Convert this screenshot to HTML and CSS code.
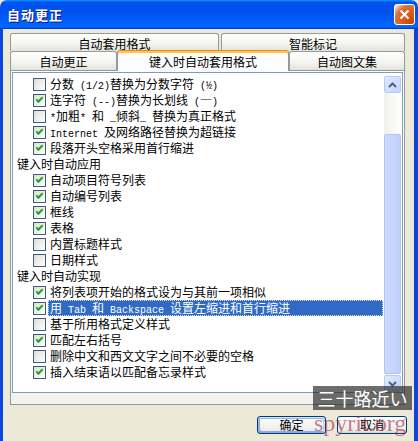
FILE: index.html
```html
<!DOCTYPE html>
<html lang="zh-CN">
<head>
    <meta charset="UTF-8">
    <meta name="viewport" content="width=device-width, initial-scale=1.0">
    <title>自动更正</title>
    <link rel="stylesheet" href="styles.css">
</head>
<body>

    <div class="window">
        <div class="titlebar">
            <span class="title">自动更正</span>
            <button class="close-btn" aria-label="关闭">
                <svg width="11" height="11" viewBox="0 0 11 11">
                    <path d="M1.5 1.5 L9.5 9.5 M9.5 1.5 L1.5 9.5" stroke="#fff" stroke-width="2" fill="none"/>
                </svg>
            </button>
        </div>

        <div class="frame">
            <div class="tabs">
                <div class="tab-row back">
                    <div class="tab tab-format">自动套用格式</div>
                    <div class="tab tab-smart">智能标记</div>
                </div>
                <div class="tab-row front">
                    <div class="tab tab-correct">自动更正</div>
                    <div class="tab tab-typing active">键入时自动套用格式</div>
                    <div class="tab tab-text">自动图文集</div>
                </div>
            </div>

            <div class="panel">
                <div class="listbox">
                    <ul class="options">
                        <li class="item"><span class="check"></span><span class="label">分数<span class="en"> (1/2)</span>替换为分数字符<span class="en"> (½)</span></span></li>
                        <li class="item"><span class="check on"></span><span class="label">连字符<span class="en"> (--)</span>替换为长划线<span class="en"> (</span>—<span class="en">)</span></span></li>
                        <li class="item"><span class="check"></span><span class="label"><span class="en">*</span>加粗<span class="en">* </span>和<span class="en"> _</span>倾斜<span class="en">_ </span>替换为真正格式</span></li>
                        <li class="item"><span class="check on"></span><span class="label"><span class="en">Internet </span>及网络路径替换为超链接</span></li>
                        <li class="item"><span class="check on"></span><span class="label">段落开头空格采用首行缩进</span></li>
                        <li class="group">键入时自动应用</li>
                        <li class="item"><span class="check on"></span><span class="label">自动项目符号列表</span></li>
                        <li class="item"><span class="check on"></span><span class="label">自动编号列表</span></li>
                        <li class="item"><span class="check on"></span><span class="label">框线</span></li>
                        <li class="item"><span class="check on"></span><span class="label">表格</span></li>
                        <li class="item"><span class="check"></span><span class="label">内置标题样式</span></li>
                        <li class="item"><span class="check"></span><span class="label">日期样式</span></li>
                        <li class="group">键入时自动实现</li>
                        <li class="item"><span class="check on"></span><span class="label">将列表项开始的格式设为与其前一项相似</span></li>
                        <li class="item selected"><span class="check on"></span><span class="label">用<span class="en"> Tab </span>和<span class="en"> Backspace </span>设置左缩进和首行缩进</span></li>
                        <li class="item"><span class="check"></span><span class="label">基于所用格式定义样式</span></li>
                        <li class="item"><span class="check on"></span><span class="label">匹配左右括号</span></li>
                        <li class="item"><span class="check"></span><span class="label">删除中文和西文文字之间不必要的空格</span></li>
                        <li class="item"><span class="check on"></span><span class="label">插入结束语以匹配备忘录样式</span></li>
                    </ul>

                    <div class="scrollbar">
                        <div class="sb-btn">
                            <svg width="9" height="6" viewBox="0 0 9 6">
                                <path d="M1 5 L4.5 1.5 L8 5" stroke="#4D6185" stroke-width="2" fill="none"/>
                            </svg>
                        </div>
                        <div class="sb-track">
                            <div class="sb-thumb"></div>
                        </div>
                        <div class="sb-btn">
                            <svg width="9" height="6" viewBox="0 0 9 6">
                                <path d="M1 1 L4.5 4.5 L8 1" stroke="#4D6185" stroke-width="2" fill="none"/>
                            </svg>
                        </div>
                    </div>
                </div>
            </div>

            <div class="buttons">
                <button class="btn default">确定</button>
                <button class="btn cancel">取消</button>
            </div>
        </div>

        <!-- watermark on top of the screenshot -->
        <div class="watermark" lang="ja">三十路近い</div>
        <div class="watermark-url">spyrit.org</div>
    </div>

</body>
</html>
```

FILE: styles.css
```css
body {
    margin: 0;
    padding: 0;
    background-color: #ECE9D8;
    font-family: "Noto Sans CJK SC", "Noto Sans", sans-serif;
    font-size: 12px;
    color: #000;
}

.window {
    position: relative;
    width: 418px;
    height: 441px;
    overflow: hidden;
    display: flex;
    flex-direction: column;
    background-color: #ECE9D8;
}

/* title bar */

.titlebar {
    height: 29px;
    flex-shrink: 0;
    display: flex;
    align-items: center;
    justify-content: space-between;
    padding: 0 3px 0 7px;
    border-radius: 7px 7px 0 0;
    background: linear-gradient(to bottom, #0997FF 0%, #0053EE 8%, #0050EE 40%, #0066FF 88%, #0066FF 93%, #005BFF 95%, #003DD7 96%, #003DD7 100%);
}

.title {
    color: #fff;
    font-weight: bold;
    font-size: 13px;
    letter-spacing: 1px;
    text-shadow: 1px 1px 0 #0F1089;
}

.close-btn {
    width: 21px;
    height: 21px;
    padding: 0;
    border: 1px solid #fff;
    border-radius: 3px;
    display: flex;
    align-items: center;
    justify-content: center;
    background-image: radial-gradient(circle at 90% 90%, #CC4600 0, #DC6527 55%, #CD7546 70%, #FFCCB2 90%, #fff 100%);
}

/* dialog body */

.frame {
    flex: 1;
    display: flex;
    flex-direction: column;
    padding: 4px 9px 0 7px;
    border-left: 3px solid #0B47DC;
    border-right: 4px solid #0B47DC;
}

.tab-row {
    display: flex;
}

.tab-row.back {
    height: 18px;
    gap: 2px;
}

.tab-row.front {
    height: 19px;
    align-items: flex-end;
}

.tab {
    box-sizing: border-box;
    height: 100%;
    display: flex;
    align-items: center;
    justify-content: center;
    padding-top: 2px;
    line-height: 14px;
    border: 1px solid #919B9C;
    border-bottom: none;
    border-radius: 3px 3px 0 0;
    background: linear-gradient(to bottom, #FFFFFF, #F3F3EF 60%, #E3E2DA);
}

.tab-format {
    width: 209px;
}

.tab-smart {
    flex: 1;
}

.tab-correct {
    width: 107px;
}

.tab-typing {
    width: 172px;
}

.tab-text {
    flex: 1;
}

.tab.active {
    position: relative;
    z-index: 1;
    height: 21px;
    margin-bottom: -1px;
    border-top-color: #E68B2C;
    background: #FCFCFE;
    box-shadow: inset 0 2px 0 #FFC83C;
}

.panel {
    box-sizing: border-box;
    height: 335px;
    padding: 1px 1px 0 1px;
    border: 1px solid #919B9C;
    background: linear-gradient(to bottom, #FCFCFE, #F4F3EE);
}

.listbox {
    box-sizing: border-box;
    height: 321px;
    display: flex;
    padding: 3px 1px 0 0;
    border: 1px solid #7F9DB9;
    background-color: #fff;
}

.options {
    flex: 1;
    list-style: none;
    margin: 0 1px 0 0;
    padding: 0;
    overflow: hidden;
}

.options li {
    height: 16px;
    display: flex;
    align-items: center;
    white-space: nowrap;
}

.options .group {
    padding-left: 4px;
    line-height: 16px;
}

.options .item {
    padding-left: 20px;
}

.check {
    box-sizing: border-box;
    width: 13px;
    height: 13px;
    flex-shrink: 0;
    margin-right: 2px;
    display: flex;
    align-items: center;
    justify-content: center;
    border: 1px solid #3F5D7D;
    background: linear-gradient(135deg, #DCDCD7, #FFFFFF);
}

.check.on::after {
    content: "";
    width: 5px;
    height: 2px;
    margin-top: -2px;
    border-left: 2px solid #21A121;
    border-bottom: 2px solid #21A121;
    transform: rotate(-45deg);
}

.label {
    flex: 1;
    box-sizing: border-box;
    height: 16px;
    line-height: 16px;
    padding: 0 2px;
}

.selected .label {
    background-color: #316AC5;
    color: #fff;
    outline: 1px dotted #D5DEF2;
    outline-offset: -1px;
}

.en {
    font-family: "Liberation Mono", monospace;
    font-size: 10px;
    white-space: pre;
}

/* scrollbar */

.scrollbar {
    width: 17px;
    flex-shrink: 0;
    display: flex;
    flex-direction: column;
}

.sb-btn {
    box-sizing: border-box;
    height: 17px;
    display: flex;
    align-items: center;
    justify-content: center;
    border: 1px solid #B7CAF5;
    border-radius: 2px;
    background: linear-gradient(135deg, #E2EAFE, #C1D3FB);
}

.sb-track {
    flex: 1;
    display: flex;
    flex-direction: column;
    justify-content: flex-end;
    background: linear-gradient(to right, #F3F1EC, #FEFEFB);
}

.sb-thumb {
    box-sizing: border-box;
    height: 240px;
    margin-bottom: 1px;
    border: 1px solid #B0C5F2;
    border-radius: 2px;
    background: linear-gradient(to right, #CCDAFC, #BFD0FA);
}

/* bottom buttons */

.buttons {
    display: flex;
    justify-content: flex-end;
    gap: 11px;
    margin: 11px -2px 0 0;
}

.btn {
    box-sizing: border-box;
    width: 69px;
    height: 18px;
    padding: 0;
    font-family: inherit;
    font-size: 12px;
    line-height: 14px;
    color: #000;
    border: 1px solid #003C74;
    border-radius: 3px;
    background: linear-gradient(to bottom, #FFFFFF, #ECEBE6 86%, #D6D0C5);
}

.btn.cancel {
    width: 70px;
}

.btn.default {
    box-shadow: inset -1px 1px #CEE7FF, inset 1px 2px #98B8EA, inset -2px 2px #BCD4F6, inset 1px -1px #89ADE4, inset 2px -2px #89ADE4;
}

/* watermark */

.watermark {
    position: absolute;
    left: 313px;
    top: 386px;
    width: 99px;
    height: 24px;
    line-height: 24px;
    text-align: center;
    font-family: "Noto Sans CJK JP", sans-serif;
    font-size: 18px;
    color: #fff;
    background-color: rgba(40, 40, 40, 0.68);
}

.watermark-url {
    position: absolute;
    left: 314px;
    top: 409px;
    font-family: "Liberation Serif", serif;
    font-size: 24px;
    line-height: 28px;
    color: rgba(160, 40, 80, 0.6);
}
```
